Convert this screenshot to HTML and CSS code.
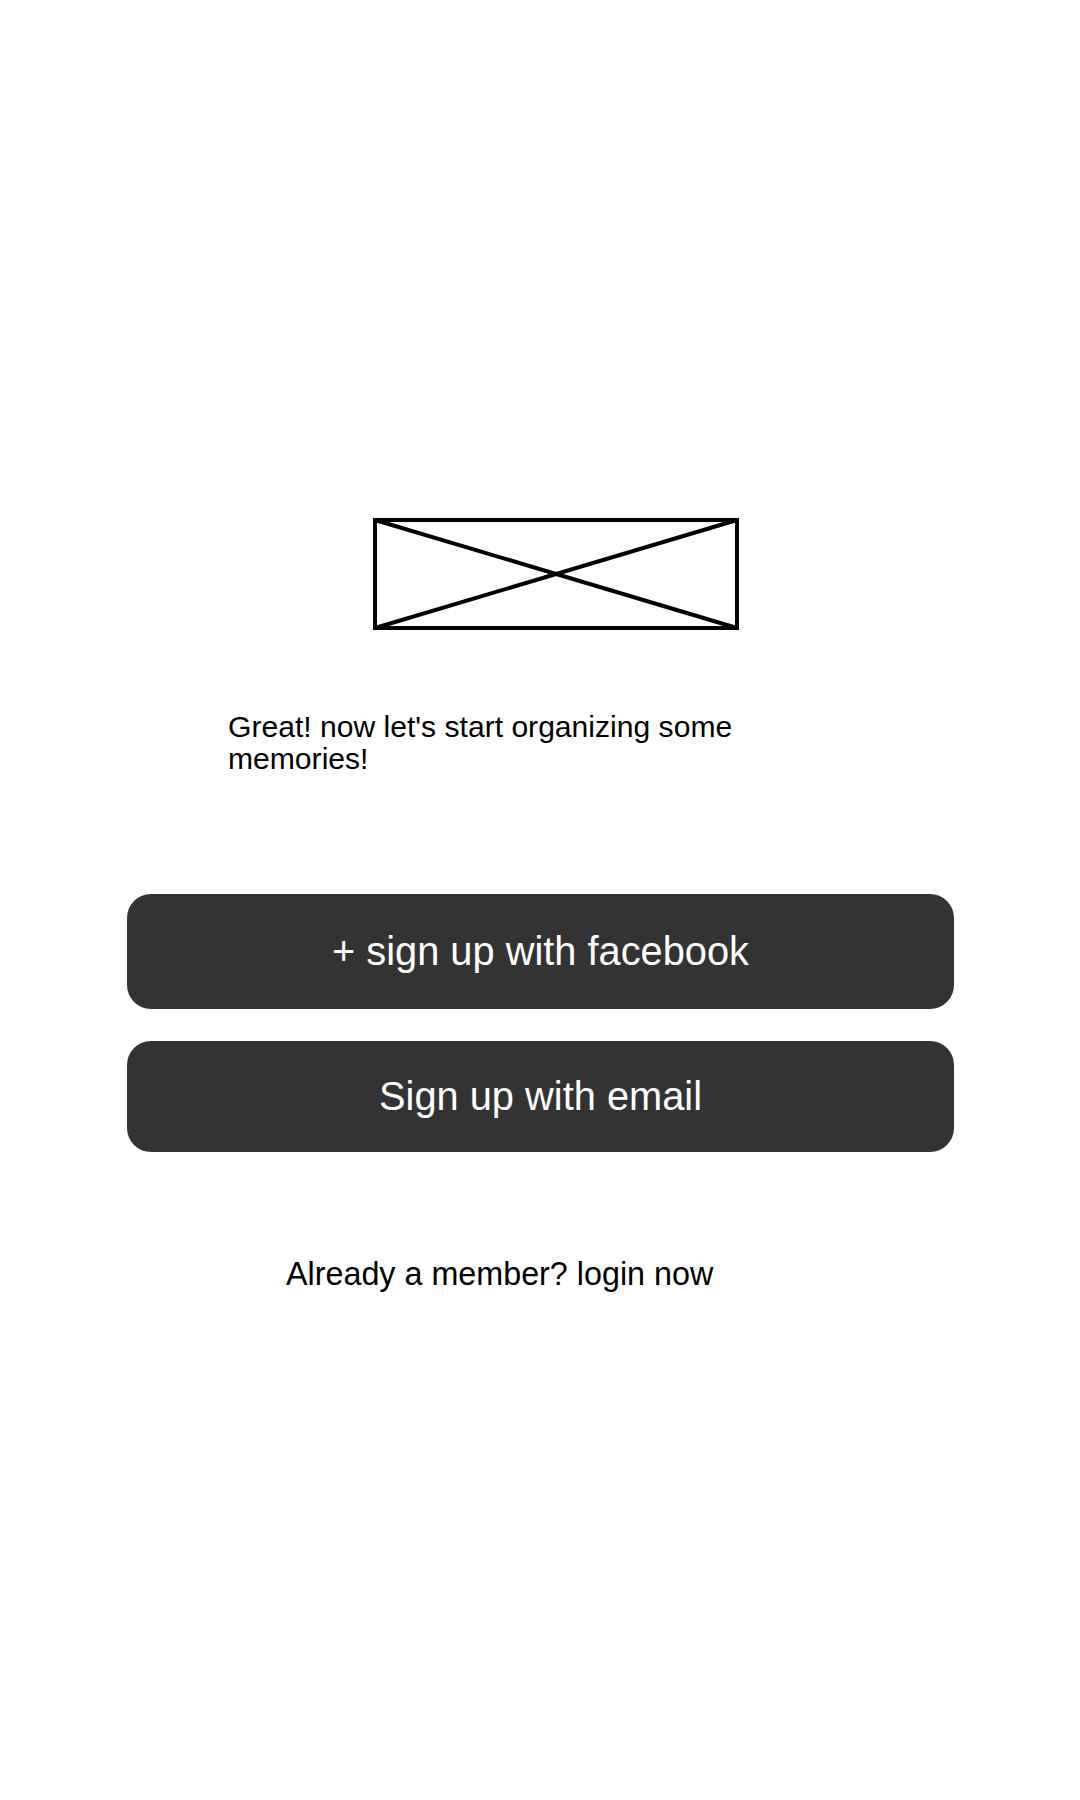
FILE: index.html
```html
<!DOCTYPE html>
<html lang="en">
<head>
<meta charset="utf-8">
<title>Sign up</title>
<link rel="stylesheet" href="styles.css">
</head>
<body>
<main class="screen">
  <svg class="logo" width="366" height="112" viewBox="0 0 366 112" aria-hidden="true">
    <rect x="2" y="2" width="362" height="108" fill="none" stroke="#000" stroke-width="4"/>
    <line x1="2" y1="2" x2="364" y2="110" stroke="#000" stroke-width="4"/>
    <line x1="2" y1="110" x2="364" y2="2" stroke="#000" stroke-width="4"/>
  </svg>
  <p class="intro">Great! now let's start organizing some memories!</p>
  <div class="actions">
    <button class="btn btn-fb">+ sign up with facebook</button>
    <button class="btn btn-email">Sign up with email</button>
  </div>
  <p class="login">Already a member? login now</p>
</main>
</body>
</html>
```

FILE: styles.css
```css
html, body {
  margin: 0;
  padding: 0;
  background: #ffffff;
}

body {
  font-family: "Liberation Sans", Arial, sans-serif;
  color: #000000;
}

.screen {
  width: 1080px;
  min-height: 1800px;
  padding-top: 518px;
  box-sizing: border-box;
  display: flex;
  flex-direction: column;
}

.logo {
  display: block;
  margin-left: 373px;
}

.intro {
  margin: 81px 0 0 228px;
  width: 540px;
  font-size: 30.1px;
  line-height: 32px;
}

.actions {
  margin: 119px 0 0 127px;
  width: 827px;
  display: flex;
  flex-direction: column;
  gap: 32px;
}

.btn {
  display: flex;
  align-items: center;
  justify-content: center;
  border: none;
  border-radius: 24px;
  background: #333333;
  color: #ffffff;
  font-family: "Liberation Sans", Arial, sans-serif;
  font-size: 39.8px;
  padding: 0;
  width: 100%;
}

.btn-fb {
  height: 115px;
}

.btn-email {
  height: 111px;
}

.login {
  margin: 104px 0 0 286px;
  font-size: 32.3px;
  line-height: 37px;
}
```
